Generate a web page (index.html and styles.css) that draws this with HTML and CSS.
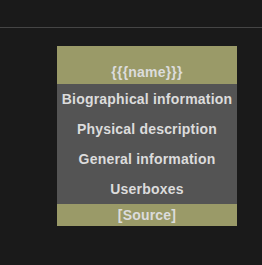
FILE: index.html
```html
<!DOCTYPE html>
<html lang="en">
<head>
    <meta charset="UTF-8">
    <title>Infobox</title>
    <link rel="stylesheet" href="styles.css">
</head>
<body>
    <div class="topbar"></div>
    <div class="infobox">
        <div class="infobox-title">{{{name}}}</div>
        <div class="infobox-row">Biographical information</div>
        <div class="infobox-row">Physical description</div>
        <div class="infobox-row">General information</div>
        <div class="infobox-row">Userboxes</div>
        <div class="infobox-source">[Source]</div>
    </div>
</body>
</html>
```

FILE: styles.css
```css
body {
    margin: 0;
    background-color: #1a1a1a;
    font-family: "Liberation Sans", Arial, sans-serif;
    font-weight: bold;
    font-size: 14px;
    letter-spacing: 0.2px;
    color: #dcdcdc;
}
.topbar {
    height: 27px;
    border-bottom: 1px solid #454545;
}
.infobox {
    width: 180px;
    margin: 18px 0 0 57px;
    background-color: #545454;
    text-align: center;
}
.infobox-title {
    height: 38px;
    line-height: 16px;
    box-sizing: border-box;
    padding-top: 18px;
    background-color: #9a9a68;
}
.infobox-row {
    height: 30px;
    line-height: 30px;
}
.infobox-source {
    height: 22px;
    line-height: 22px;
    background-color: #9a9a68;
}
```
